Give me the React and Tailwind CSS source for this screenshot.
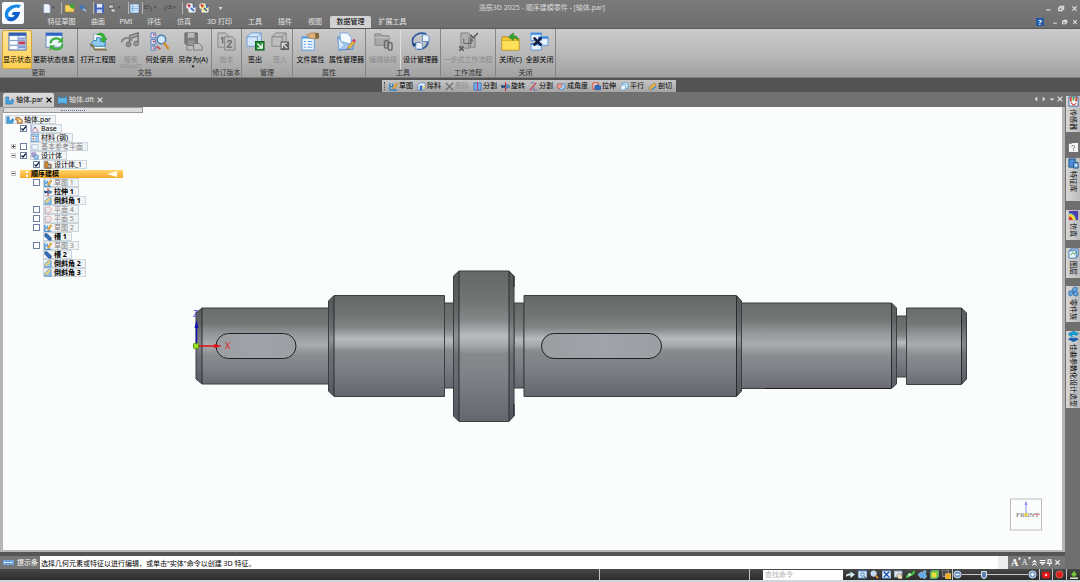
import React, { useState } from 'react';

const Svg = ({ box = 20, className = 'size-5', children }) => (
  <svg viewBox={`0 0 ${box} ${box}`} className={`shrink-0 ${className}`} fill="none" aria-hidden="true">
    {children}
  </svg>
);

// ribbon drawings, 20 x 20
const ribbonIcons = {
  status: (
    <>
      <rect x="1" y="1" width="18" height="18" fill="#dfe9f8" stroke="#4a6aa8" />
      <path d="M1 1h18v3H1z" fill="#2f5fb4" />
      <path d="M2 5h8v3H2zM2 10h8v3H2zM2 15h8v3H2z" fill="#fff" />
      <path d="M11 6h7v2h-7zM11 15h7v2h-7z" fill="#7b96cf" />
      <path d="M11 10h7v3h-7z" fill="#c43a56" />
      <path d="M2 9h16M2 14h16M10.500 4v14" stroke="#7f9ccc" />
    </>
  ),
  refresh: (
    <>
      <rect x="1" y="1" width="17" height="15" fill="#eef4fc" stroke="#5f86bd" />
      <path d="M1 1h17v3H1z" fill="#2c66c6" />
      <path d="M6 12a6 5 0 0 1 11-3" stroke="#3fae3c" strokeWidth="2.500" />
      <path d="M19 5v6h-6z" fill="#3fae3c" />
      <path d="M18 13a6 5 0 0 1-11 3" stroke="#3fae3c" strokeWidth="2.500" />
      <path d="M5 20v-6h6z" fill="#3fae3c" />
    </>
  ),
  drawing: (
    <>
      <path d="M5 2h8l4 4v12H5z" fill="#f3f7fc" stroke="#8fa7c4" />
      <path d="M2 12l3-3h3V6h4v4h5v5H2z" fill="#8ecbee" stroke="#2f7fae" />
      <path d="M1 13h3l2 6h13l-3-1H6z" fill="#b58a43" stroke="#6b5123" strokeWidth=".6" />
      <path d="M8 3c5-4 9-1 9 4h2l-4 4-3-4h2c0-3-2-4-6-4z" fill="#35b52f" stroke="#1d8420" strokeWidth=".5" />
    </>
  ),
  search3d: (
    <>
      <path d="M9 4l9-3v10M9 4v8M9 7l9-3" stroke="#707070" strokeWidth="1.500" />
      <circle cx="8" cy="13" r="2.500" fill="#8f8f8f" stroke="#6d6d6d" />
      <circle cx="16" cy="12" r="2.500" fill="#9b9b9b" stroke="#6d6d6d" />
      <path d="M0 11c3-6 7-6 12-2" stroke="#858585" strokeWidth="2" />
    </>
  ),
  where: (
    <>
      <path d="M1 1h5v5H1zM1 8h5v5H1zM1 15h5v4H1z" fill="#dfe8fa" stroke="#5478c0" />
      <path d="M3 3h2M3 10h2M3 17h2M7 15l4 3" stroke="#c43b3b" strokeWidth="1.500" />
      <circle cx="12" cy="8" r="4.500" fill="#cfe9fa" stroke="#4a7eb4" strokeWidth="1.500" />
      <path d="M15 12l4 5" stroke="#d98a2b" strokeWidth="2.500" strokeLinecap="round" />
    </>
  ),
  saveAs: (
    <>
      <path d="M1 1h13v13H3l-2-2z" fill="#7e7e7e" stroke="#626262" />
      <path d="M4 1h7v5H4z" fill="#b8b8b8" />
      <path d="M4 9h7v5H4z" fill="#969696" />
      <path d="M10 12h6l3 3v4h-9zM3 15v4h5" fill="#bdbdbd" stroke="#777" />
    </>
  ),
  revision: (
    <>
      <path d="M1 1h8l3 3v12H1z" fill="#bcbcbc" stroke="#868686" />
      <path d="M8 5h8l3 3v11H8z" fill="#b9b9b9" stroke="#868686" />
      <path d="M4 7l2-1v6M11 11c1-3 5-2 4 0l-4 5h5" stroke="#666" strokeWidth="1.300" />
    </>
  ),
  checkout: (
    <>
      <path d="M1 5l4-4h11v11l-4 3H1z" fill="#d5e6f8" stroke="#6a9bd1" />
      <path d="M1 5h11v10M12 5l4-4" stroke="#6a9bd1" />
      <rect x="10" y="10" width="9" height="9" fill="#1f8a2c" stroke="#0d5f1a" />
      <path d="M12 12l4 4M17 12v5h-5" stroke="#fff" strokeWidth="1.500" />
    </>
  ),
  checkin: (
    <>
      <path d="M1 5l4-4h11v11l-4 3H1z" fill="#bdbdbd" stroke="#858585" />
      <path d="M1 5h11v10M12 5l4-4" stroke="#858585" />
      <rect x="10" y="10" width="9" height="9" fill="#606060" />
      <path d="M17 17l-4-4M12 17v-5h5" stroke="#ddd" strokeWidth="1.500" />
    </>
  ),
  fileProps: (
    <>
      <rect x="1" y="5" width="13" height="14" fill="#f1f7fe" stroke="#5b9bdd" />
      <path d="M1 5h13v2H1z" fill="#5ea3e4" />
      <path d="M3 10h2M7 10h5M3 13h2M7 13h5M3 16h2M7 16h5" stroke="#5b9bdd" />
      <path d="M6 3l5-2h5v6h-4l-4-1z" fill="#dcb078" stroke="#8d6938" strokeWidth=".6" />
      <path d="M15 1h4v6h-4z" fill="#85683a" />
    </>
  ),
  propManager: (
    <>
      <path d="M1 5l7 3 9 2v8L2 19z" fill="#a5c8f2" stroke="#4e85cc" />
      <path d="M3 1h8l4 5v7L4 10z" fill="#f4f9ff" stroke="#76a4dd" />
      <path d="M1 6l7 8-6 5z" fill="#d9e9fb" stroke="#5b8dd1" strokeWidth=".6" />
      <path d="M11 18l1-3 5-6 2 2-5 6z" fill="#efc04b" stroke="#7b5a17" strokeWidth=".6" />
      <path d="M16 9l2-2 2 2-2 2z" fill="#d33a76" />
    </>
  ),
  links: (
    <>
      <path d="M1 2h6l2 2h7v10H1z" fill="#a8a8a8" stroke="#888" />
      <path d="M1 6h15" stroke="#c7c7c7" />
      <rect x="11" y="9" width="4" height="8" rx="2" stroke="#6b6b6b" strokeWidth="1.500" />
      <rect x="15" y="11" width="4" height="8" rx="2" stroke="#6b6b6b" strokeWidth="1.500" />
    </>
  ),
  designManager: (
    <>
      <path d="M3 14C-2 5 8-1 16 2M18 9c0 6-5 10-11 9" stroke="#2e5b9d" strokeWidth="1.800" />
      <path d="M12 3h5l2 2v5h-7zM5 11h5l2 2v5H5z" fill="#edf4ff" stroke="#5a86c7" />
      <path d="M1 12l5 0-3 4z" fill="#173d7c" />
    </>
  ),
  workflow: (
    <>
      <path d="M2 1h8l2 3v13H2zM10 6h7v10h-7z" fill="#b0b0b0" stroke="#858585" />
      <path d="M0 15l5 5M5 15l-5 5M12 3l3 3 5-5" stroke="#555" strokeWidth="1.500" />
      <path d="M5 7v5h8V8M11 10l2-3 2 3" stroke="#5f5f5f" />
    </>
  ),
  closeFile: (
    <>
      <path d="M1 5h6l2 2h10v12H1z" fill="#f5c733" stroke="#b88d19" />
      <path d="M1 9h18v10H1z" fill="#ffe05a" stroke="#c29a25" strokeWidth=".6" />
      <path d="M18 9c0-4-2-5-5-5V1L8 5l5 4V6c2 0 4 1 5 3z" fill="#34a52d" stroke="#18761b" strokeWidth=".5" />
    </>
  ),
  closeAll: (
    <>
      <path d="M1 1h11v8H1zM9 5h10v9H9zM1 12h11v7H1z" fill="#e7f1fd" stroke="#5b97dc" />
      <path d="M1 1h11v2H1zM9 5h10v2H9zM1 12h11v2H1z" fill="#3f87dd" />
      <path d="M4 6l8 8M12 6l-8 8" stroke="#101a3d" strokeWidth="2.500" />
    </>
  ),
};

const ribbonGroups = [
  { name: '更新', width: 'w-[78px]', pad: 'pl-[2px]', items: [
    { icon: 'status', label: '显示状态', width: 'w-[30px]', active: true },
    { icon: 'refresh', label: '更新状态信息', width: 'w-[44px]' },
  ] },
  { name: '文档', width: 'w-[134px]', items: [
    { icon: 'drawing', label: '打开工程图', width: 'w-[40px]' },
    { icon: 'search3d', label: '搜索', sub: '3DfindIT', width: 'w-[25px]', disabled: true },
    { icon: 'where', label: '何处使用', width: 'w-[33px]' },
    { icon: 'saveAs', label: '另存为(A)', width: 'w-[34px]', menu: true },
  ] },
  { name: '修订版本', width: 'w-[30px]', items: [
    { icon: 'revision', label: '版本', width: 'w-[29px]', disabled: true },
  ] },
  { name: '管理', width: 'w-[51px]', items: [
    { icon: 'checkout', label: '签出', width: 'w-[26px]' },
    { icon: 'checkin', label: '签入', width: 'w-[24px]', disabled: true },
  ] },
  { name: '属性', width: 'w-[73px]', items: [
    { icon: 'fileProps', label: '文件属性', width: 'w-[35px]' },
    { icon: 'propManager', label: '属性管理器', width: 'w-[37px]' },
  ] },
  { name: '工具', width: 'w-[75px]', items: [
    { icon: 'links', label: '编辑链接', width: 'w-[34px]', disabled: true },
    { icon: 'designManager', label: '设计管理器', width: 'w-[40px]', divider: true },
  ] },
  { name: '工作流程', width: 'w-[55px]', items: [
    { icon: 'workflow', label: '一步式工作流程', width: 'w-[54px]', disabled: true },
  ] },
  { name: '关闭', width: 'w-[60px]', items: [
    { icon: 'closeFile', label: '关闭(C)', width: 'w-[29px]' },
    { icon: 'closeAll', label: '全部关闭', width: 'w-[29px]' },
  ] },
];

const menuTabs = [
  ['特征草图', 'w-[43px]'],
  ['曲面', 'w-[30px]'],
  ['PMI', 'w-[26px]'],
  ['评估', 'w-[30px]'],
  ['仿真', 'w-[30px]'],
  ['3D 打印', 'w-[41px]'],
  ['工具', 'w-[30px]'],
  ['插件', 'w-[30px]'],
  ['视图', 'w-[30px]'],
  ['数据管理', 'w-[41px]'],
  ['扩展工具', 'w-[43px]'],
];

// small drawings, 10 x 10
const smallIcons = {
  sketch: (
    <>
      <path d="M1 1v8h8M1 5h3V2M6 9V6" stroke="#2b7fc9" strokeWidth="1.300" />
      <path d="M4 7l4-6 2 1-4 6z" fill="#f0b13b" stroke="#8c6317" strokeWidth=".4" />
    </>
  ),
  cut: (
    <>
      <path d="M1 3l2-2h6v6L7 9H1z" fill="#e4f0fb" stroke="#3b78bd" strokeWidth=".7" />
      <path d="M3 4h3v5H3z" fill="#2c73c9" />
      <path d="M6 6l3-3v3L7 8z" fill="#eccb6a" />
    </>
  ),
  remove: <path d="M1 1l8 8M9 1L1 9" stroke="#666" strokeWidth="1.400" />,
  split: (
    <>
      <path d="M1 1h8v8H1z" fill="#74aeea" stroke="#2a6ab5" strokeWidth=".8" />
      <path d="M5 0v10" stroke="#c42c60" />
    </>
  ),
  rotate: (
    <>
      <path d="M3 4l4-1 3 2-3 2-4-1z" fill="#5c9bd4" stroke="#215b98" strokeWidth=".8" />
      <path d="M5 0v10" stroke="#c43b2f" strokeWidth="1.200" />
      <path d="M0 3l5 2-4 2z" fill="#123c78" />
    </>
  ),
  slash: (
    <>
      <path d="M1 9l7-8" stroke="#c83246" strokeWidth="1.200" />
      <path d="M2 1h4M6 6l-1 3h4" stroke="#815ebb" />
    </>
  ),
  angle: (
    <>
      <path d="M1 2h8v5L5 9 1 7z" fill="#a5caef" stroke="#417cbb" strokeWidth=".7" />
      <path d="M0 3l5-1v3L2 8z" fill="#f5a68e" stroke="#cf4131" strokeWidth=".6" />
    </>
  ),
  extrude: (
    <>
      <path d="M1 1h6v7H1z" fill="#f6d8d4" stroke="#cf4131" />
      <path d="M3 4l3-1 4 2v3L7 9 3 8z" fill="#2c6dbd" stroke="#153f78" strokeWidth=".4" />
    </>
  ),
  parallel: (
    <>
      <path d="M3 1h6v6H3z" fill="#cfe6f7" stroke="#529bcc" strokeWidth=".8" />
      <path d="M1 4l5-1v5l-5 1z" fill="#f0f9ff" stroke="#529bcc" strokeWidth=".6" />
    </>
  ),
  section: (
    <>
      <path d="M1 7l6-6 2 2-6 6z" fill="#eeb541" stroke="#92671a" strokeWidth=".6" />
      <path d="M3 9l6-5v2L5 9z" fill="#4f91d6" />
    </>
  ),
  part: <path d="M1 1h3v4l2 1 2-3 2 2-2 4H1z" fill="#47a3df" stroke="#1d6ca9" strokeWidth=".6" />,
  lock: (
    <>
      <path d="M1 2h4l4 3v4H3V5H1z" fill="#f3b762" stroke="#79461c" strokeWidth=".8" />
      <path d="M5 5h2v2H5z" fill="#fff" />
    </>
  ),
  base: (
    <>
      <path d="M1 0v9h9" stroke="#8d85cb" />
      <path d="M2 7l3-4 2 2 2 3" stroke="#b64f77" />
      <circle cx="5" cy="3" r="1" fill="#2d65b4" />
    </>
  ),
  material: (
    <>
      <path d="M0 1h10v8H0z" fill="#e2f1fd" stroke="#3285ca" />
      <path d="M2 3h2M2 6h2" stroke="#bd5134" strokeWidth="1.500" />
      <path d="M5 3h4M5 6h4" stroke="#3285ca" />
    </>
  ),
  planes: <path d="M1 2h8v6H1zM1 8V4" fill="#eef4fb" stroke="#a2bcda" strokeWidth=".8" />,
  bodies: (
    <>
      <path d="M1 1h5v5H1z" fill="#b3a6d6" stroke="#6757a0" strokeWidth=".6" />
      <path d="M4 4h5v5H4z" fill="#9ecbf0" stroke="#377bb5" strokeWidth=".7" />
    </>
  ),
  body: (
    <>
      <path d="M1 1h4v3h4v5H1z" fill="#d98f33" stroke="#62371b" strokeWidth=".8" />
      <path d="M5 5h3v3H5z" fill="#c0daf3" stroke="#345" strokeWidth=".5" />
    </>
  ),
  plane: (
    <>
      <path d="M1 3l4-2 4 2v4L5 9 1 8z" fill="#fbeeee" stroke="#d88888" strokeWidth=".8" />
      <path d="M2 1v8M5 4v3" stroke="#8fb4e0" strokeWidth=".8" />
    </>
  ),
  chamfer: (
    <>
      <path d="M1 5l4-4h4v8H1z" fill="#8fc2ec" stroke="#2f74b0" strokeWidth=".7" />
      <path d="M1 6l5-5h2v2L3 8z" fill="#ebd07c" />
    </>
  ),
  slot: <path d="M1 1h3l5 5v3H6L1 4z" fill="#346dbb" stroke="#173a70" strokeWidth=".7" />,
};

const SmallIcon = ({ name, className = 'size-[9px]' }) => (
  <Svg box={10} className={className}>{smallIcons[name]}</Svg>
);

const floatTools = [
  ['sketch', '草图'],
  ['cut', '除料'],
  ['remove', '删除', true],
  ['split', '分割'],
  ['rotate', '旋转'],
  ['slash', '分割'],
  ['angle', '成角度'],
  ['extrude', '拉伸'],
  ['parallel', '平行'],
  ['section', '剖切'],
];

const treeRows = [
  { id: 'base', level: 1, check: true, icon: 'base', label: 'Base' },
  { id: 'material', level: 1, icon: 'material', label: '材料 (钢)' },
  { id: 'refs', level: 1, expander: '+', check: false, icon: 'planes', label: '基本参考平面', muted: true },
  { id: 'bodies', level: 1, expander: '−', check: true, icon: 'bodies', label: '设计体' },
  { id: 'body1', level: 2, check: true, icon: 'body', label: '设计体_1' },
  { id: 'ordered', section: true, expander: '−', label: '顺序建模' },
  { id: 'sk1', level: 2, check: false, icon: 'sketch', label: '草图 1', muted: true },
  { id: 'ex1', level: 2, icon: 'rotate', label: '拉伸 1', bold: true },
  { id: 'ch1', level: 2, icon: 'chamfer', label: '倒斜角 1', bold: true },
  { id: 'pl4', level: 2, check: false, icon: 'plane', label: '平面 4', muted: true },
  { id: 'pl5', level: 2, check: false, icon: 'plane', label: '平面 5', muted: true },
  { id: 'sk2', level: 2, check: false, icon: 'sketch', label: '草图 2', muted: true },
  { id: 'sl1', level: 2, icon: 'slot', label: '槽 1', bold: true },
  { id: 'sk3', level: 2, check: false, icon: 'sketch', label: '草图 3', muted: true },
  { id: 'sl2', level: 2, icon: 'slot', label: '槽 2', bold: true },
  { id: 'ch2', level: 2, icon: 'chamfer', label: '倒斜角 2', bold: true },
  { id: 'ch3', level: 2, icon: 'chamfer', label: '倒斜角 3', bold: true },
];

const sideTabs = [
  { label: '传感器', height: 'h-9', gap: 'mb-[10px]', art: (
    <>
      <path d="M1 1h10v10H1z" fill="#fff" stroke="#3762a0" />
      <path d="M2 1h2v5H2z" fill="#d03b32" /><path d="M5 1h2v4H5z" fill="#2fa44b" /><path d="M8 1h2v5H8z" fill="#d03b32" />
      <path d="M3 7l3 3 3-2" stroke="#d65043" strokeWidth="1.300" />
    </>
  ) },
  { label: '', title: '帮助', height: 'h-[10px]', gap: 'mb-[6px]', art: (
    <>
      <path d="M1 2h3l1-1h6v10H1z" fill="#f4f4f4" />
      <path d="M4 5c1-2 4-1 3 1L6 7v1M6 9v1" stroke="#666" />
    </>
  ) },
  { label: '特征库', height: 'h-[43px]', gap: 'mb-[9px]', art: (
    <>
      <path d="M1 1h7v9H1z" fill="#4d8cd6" stroke="#23568f" />
      <path d="M6 5h5v6H6z" fill="#79aee6" stroke="#23568f" />
      <path d="M8 7h2v2H8z" fill="#fff" />
    </>
  ) },
  { label: '仿真', height: 'h-[30px]', gap: 'mb-[8px]', art: (
    <>
      <path d="M1 1h10v10H1z" fill="#4b3fae" />
      <path d="M1 3a8 8 0 0 1 8 8H1z" fill="#4fa6c4" />
      <path d="M1 4a7 7 0 0 1 7 7H1z" fill="#f1dc3a" />
      <path d="M1 7a4 4 0 0 1 4 4H1z" fill="#dd3526" />
    </>
  ) },
  { label: '图层', height: 'h-[30px]', gap: 'mb-[8px]', art: (
    <>
      <path d="M3 1h8v8H3z" fill="#d1e5f9" stroke="#3b73b4" />
      <path d="M1 3h8v8H1z" fill="#f0f7fd" stroke="#3b73b4" />
      <path d="M3 8l2-3 2 2 2-3" stroke="#34a357" />
    </>
  ) },
  { label: '零件族', height: 'h-9', gap: 'mb-[9px]', art: (
    <path d="M1 6l2-1 2 1v3l-2 2-2-1zM5 3l2-2 3 1v3L7 7 5 6zM6 7l3-1 2 1v3l-2 1-3-1z" fill="#62a6e1" stroke="#235d9b" strokeWidth=".7" />
  ) },
  { label: '佳曲参数化设计选型', height: 'h-[77px]', gap: '', art: (
    <>
      <path d="M6 0l6 3-3 2-3-1-2 1 8 4-6 3-6-3 3-2 3 1 2-1-8-4z" fill="#155fae" />
      <path d="M6 0l6 3-3 2-3-1-2 1 2 1-1 1-5-3z" fill="#119fd1" />
    </>
  ) },
];

const QuickBar = () => {
  const sep = <span className="h-3 w-px bg-[#b5b5b5]" />;
  const btn = 'grid h-3 w-[11px] place-items-center';
  return (
    <div className="flex items-center pl-[17px]">
      <button className={btn} aria-label="新建">
        <Svg box={10} className="size-[9px]"><path d="M2 0h5l2 2v8H2z" fill="#eef5fd" stroke="#8eabd0" strokeWidth=".7" /></Svg>
      </button>
      <span className="mr-[5px] w-1 text-[5px] text-[#4d4d4d]">▾</span>
      {sep}
      <button className={`${btn} ml-[2px]`} aria-label="打开">
        <Svg box={10} className="size-[10px]">
          <path d="M0 2h4l1 1h4v6H0z" fill="#f6d25e" stroke="#a9821f" strokeWidth=".6" />
          <path d="M5 3c0-3 4-3 4 0l1-1-2 4-3-2z" fill="#38a737" />
        </Svg>
      </button>
      <button className={`${btn} ml-[2px]`} aria-label="云">
        <Svg box={10} className="size-[8px]"><circle cx="4" cy="4" r="3" fill="#4077b7" /><path d="M5 6l4 3" stroke="#9cbee4" strokeWidth="2" /></Svg>
      </button>
      <span className="w-[5px]" />
      {sep}
      <button className={btn} aria-label="保存">
        <Svg box={10} className="size-[9px]">
          <path d="M0 0h10v10H0z" fill="#3d5fc0" /><path d="M2 0h6v4H2z" fill="#e3ebfb" /><path d="M2 6h6v4H2z" fill="#c6d3ee" />
        </Svg>
      </button>
      <button className={`${btn} ml-[2px]`} aria-label="打印">
        <Svg box={10} className="size-[9px]"><path d="M1 1h5v4H1zM4 4l5 3-3 3-3-3z" fill="#c9c9c9" stroke="#4d4d4d" strokeWidth=".7" /></Svg>
      </button>
      <span className="mr-[6px] w-1 text-[5px] text-[#4d4d4d]">▾</span>
      {sep}
      <button className={btn} aria-label="表">
        <Svg box={10} className="size-[9px]"><path d="M0 0h10v10H0z" fill="#e9f4ff" stroke="#3d7fc2" /><path d="M1 3h8M1 5h8M1 7h8M3 1v8" stroke="#5997d5" strokeWidth=".7" /></Svg>
      </button>
      <span className="w-[2px]" />
      {sep}
      <button className={btn} aria-label="撤销">
        <Svg box={10} className="size-[9px]"><path d="M1 1v4h4M1 4c3-4 9-1 6 4" stroke="#555" strokeWidth="1.200" /></Svg>
      </button>
      <span className="w-[8px] text-[5px] text-[#4d4d4d]">▾</span>
      <button className={btn} aria-label="重做">
        <Svg box={10} className="size-[9px]"><path d="M9 1v4H5M9 4C6 0 0 3 3 8" stroke="#555" strokeWidth="1.200" /></Svg>
      </button>
      <span className="w-[9px] text-[5px] text-[#4d4d4d]">▾</span>
      {sep}
      {['选择', '过滤'].map((t, i) => (
        <button key={t} className={`${btn} ml-[2px]`} aria-label={t}>
          <Svg box={10} className="size-[10px]">
            <path d="M1 1h5v3h3v5H3V5H1z" fill={i ? '#f3dd68' : '#cfe2f8'} stroke="#fff" />
            <path d="M1 1l4 1-2 3z" fill="#cf2f36" />
            <path d="M5 5l3 3M8 2v3" stroke="#3065b5" strokeWidth="1.500" />
          </Svg>
        </button>
      ))}
      <button className={`${btn} ml-[6px] text-[6px] text-[#eee]`} aria-label="自定义">▾</button>
    </div>
  );
};

const WindowButtons = ({ help }) => (
  <div className="flex items-center gap-1 pr-[2px] text-[#dedede]">
    {help && (
      <button className="mr-1 grid size-[8px] place-items-center bg-[#235ba8] text-[7px] leading-none font-bold text-white" aria-label="帮助">?</button>
    )}
    {[
      ['最小化', 'M2 7h6'],
      ['还原', 'M1 4h5v4H1zM3 4V2h5v4H6'],
      ['关闭', 'M2 2l6 6M8 2L2 8'],
    ].map(([label, d]) => (
      <button key={label} className={help ? '' : 'ml-[2px]'} aria-label={label}>
        <Svg box={10} className={help ? 'size-[6px]' : 'size-[7px]'}><path d={d} stroke="currentColor" strokeWidth="1.800" /></Svg>
      </button>
    ))}
  </div>
);

const Header = ({ tab, onTab }) => (
  <header className="flex h-7 shrink-0 bg-linear-to-b from-[#7b7b7b] to-[#6e6e6e]">
    <div className="w-6 shrink-0 pt-[2px] pl-[2px]">
      <svg viewBox="0 0 22 22" className="size-[22px]" aria-label="浩辰3D">
        <rect width="22" height="22" rx="2" fill="#f6faff" />
        <path d="M19 3C11 1 4 5 3 11c-1 6 3 9 8 7 4-1 6-4 7-8h-7l-1 3h3c-1 2-3 3-5 2-3-1-2-5 1-7 3-3 6-3 8-2z" fill="#1687e8" />
        <path d="M18 10h-7l-1 3h3c-1 2-3 3-5 2l-3 3c4 3 11 1 13-8z" fill="#0d5ecb" />
      </svg>
    </div>
    <div className="flex min-w-0 flex-1 flex-col">
      <div className="grid h-4 grid-cols-[1fr_auto_1fr] items-center">
        <QuickBar />
        <h1 className="pr-5 leading-[10px] text-[#dadada]">浩辰3D 2025 - 顺序建模零件 - [轴体.par]</h1>
        <div className="flex justify-end"><WindowButtons /></div>
      </div>
      <div className="flex h-3 items-stretch justify-between">
        <nav className="flex pl-4">
          {menuTabs.map(([name, width]) => (
            <button
              key={name}
              onClick={() => onTab(name)}
              className={`${width} rounded-t-xs text-center leading-3 whitespace-nowrap ${
                tab === name ? 'bg-[#d2d2d2] text-black' : 'text-[#e4e4e4]'
              }`}
            >
              {name}
            </button>
          ))}
        </nav>
        <WindowButtons help />
      </div>
    </div>
  </header>
);

const Ribbon = () => (
  <section className="flex h-[50px] shrink-0 border-y border-t-[#595959] border-b-[#7d7d7d] bg-linear-to-b from-[#cbcbcb] via-[#b9b9b9] to-[#a1a1a1]">
    {ribbonGroups.map((group) => (
      <div key={group.name} className={`${group.width} flex shrink-0 flex-col border-r border-[#858585]`}>
        <div className={`flex flex-1 pt-px ${group.pad || ''}`}>
          {group.items.map((item) => (
            <button
              key={item.label}
              disabled={item.disabled}
              className={`${item.width} flex h-[39px] shrink-0 flex-col items-center pt-[2px] whitespace-nowrap ${
                item.active ? 'rounded-xs border border-[#d0a33c] bg-linear-to-b from-[#ffe49a] to-[#ffd04d] pt-px' : ''
              } ${item.divider ? 'border-l border-[#dedede]' : ''} ${item.disabled ? 'text-[#8b8b8b]' : 'text-black'}`}
            >
              <Svg className="size-[19px]">{ribbonIcons[item.icon]}</Svg>
              <span className="mt-[5px] leading-2">{item.label}</span>
              {item.sub && <span className="font-['Liberation_Serif',serif] text-[6px] leading-1">{item.sub}</span>}
              {item.menu && <span className="pt-px text-[3px] leading-1">▼</span>}
            </button>
          ))}
        </div>
        <div className="text-center leading-2 whitespace-nowrap text-[#303030]">{group.name}</div>
      </div>
    ))}
  </section>
);

const FloatBar = () => (
  <div className="flex h-[14px] shrink-0 items-end justify-center bg-[#535353] pr-[22px]">
    <div className="flex h-3 items-center gap-1 bg-linear-to-b from-[#c6c6c6] to-[#a5a5a5] pr-1 pl-[2px]">
      <span className="h-2 border-l border-dotted border-[#444]" />
      {floatTools.map(([icon, label, disabled], i) => (
        <button key={i} disabled={disabled} className={`flex items-center gap-px leading-3 whitespace-nowrap ${disabled ? 'text-[#8e8e8e]' : 'text-black'}`}>
          <SmallIcon name={icon} />
          {label}
        </button>
      ))}
    </div>
  </div>
);

const CloseMark = () => (
  <Svg box={10} className="size-[6px]"><path d="M1 1l8 8M9 1L1 9" stroke="currentColor" strokeWidth="2" /></Svg>
);

const DocTabs = () => (
  <div className="flex h-[15px] shrink-0 items-end pl-[3px]">
    <div className="flex h-[14px] w-[51px] items-center justify-between rounded-t-xs bg-linear-to-b from-[#dedede] to-[#c4c4c4] px-[2px] text-black">
      <button className="flex items-center gap-[2px] leading-3"><SmallIcon name="part" className="size-[9px]" />轴体.par</button>
      <button aria-label="关闭 轴体.par"><CloseMark /></button>
    </div>
    <div className="flex h-[14px] w-[51px] items-center justify-between pr-[2px] pl-1 text-[#e2e2e2]">
      <button className="flex items-center gap-[2px] leading-3">
        <Svg box={10} className="size-[9px]"><path d="M0 1h2v1h6V1h2v8H8V8H2v1H0z" fill="#5fb5ea" stroke="#2a77ac" strokeWidth=".6" /></Svg>
        轴体.dft
      </button>
      <button aria-label="关闭 轴体.dft"><CloseMark /></button>
    </div>
    <div className="ml-auto flex h-[15px] items-center gap-[2px] pr-[2px] pb-[2px] text-[#e2e2e2]">
      {[['上一个', 'M7 1v8L3 5z'], ['下一个', 'M3 1v8l4-4z'], ['列表', 'M1 4h8L5 8z']].map(([label, d]) => (
        <button key={label} aria-label={label}><Svg box={10} className="size-[6px]"><path d={d} fill="currentColor" /></Svg></button>
      ))}
      <button aria-label="关闭"><CloseMark /></button>
    </div>
  </div>
);

const TreeCheck = ({ label, initial }) => {
  const [on, setOn] = useState(initial);
  return (
    <span className="grid size-[7px] shrink-0">
      <input
        type="checkbox"
        aria-label={label}
        checked={on}
        onChange={() => setOn(!on)}
        className="col-start-1 row-start-1 size-[7px] appearance-none border border-[#6d80a0] bg-white"
      />
      {on && (
        <svg viewBox="0 0 7 7" className="pointer-events-none col-start-1 row-start-1 size-[7px]" fill="none">
          <path d="M1.500 3.500l1.500 1.500 3-3.500" stroke="#101c3a" strokeWidth="1.200" />
        </svg>
      )}
    </span>
  );
};

const Expander = ({ sign, label }) => (
  <button aria-label={`展开 ${label}`} className="block size-[5px]">
    <svg viewBox="0 0 10 10" className="size-[5px]" fill="none">
      <path d="M1 1h8v8H1z" fill="#fff" stroke="#8a8a8a" />
      <path d={sign === '+' ? 'M2 5h6M5 2v6' : 'M2 5h6'} stroke="#222" strokeWidth="1.500" />
    </svg>
  </button>
);

const TreeRow = ({ row }) => {
  if (row.section) {
    return (
      <li className="flex h-[9px] items-center gap-1">
        <Expander sign={row.expander} label={row.label} />
        <div className="flex h-2 w-[103px] items-center justify-between bg-linear-to-b from-[#ffd568] to-[#f5aa26] pr-[6px] pl-[6px] font-bold leading-2 text-black">
          <span className="flex items-center gap-[3px]">
            <span className="h-[6px] border-l-2 border-dotted border-white" />
            {row.label}
          </span>
          <svg viewBox="0 0 10 6" className="h-[6px] w-[10px]"><path d="M0 3l10-3v6z" fill="#fffbe8" /></svg>
        </div>
      </li>
    );
  }
  const tone = row.muted ? 'text-[#7e7e7e]' : 'text-black';
  return (
    <li className={`flex h-[9px] items-center ${row.level === 2 ? 'pl-[13px]' : ''}`}>
      <span className="w-[9px]">{row.expander && <Expander sign={row.expander} label={row.label} />}</span>
      <span className="w-[10px]">{row.check !== undefined && <TreeCheck label={row.label} initial={row.check} />}</span>
      <span className={`flex h-[9px] items-center gap-[2px] border border-[#ccd5dc] bg-[#f1f4f5] pr-1 leading-2 whitespace-nowrap ${tone} ${row.bold ? 'font-bold' : ''}`}>
        <SmallIcon name={row.icon} className="size-2" />
        {row.label}
      </span>
    </li>
  );
};

const FeatureTree = () => (
  <aside className="relative w-[140px]">
    <div className="flex h-[6px] items-center justify-center border border-[#9a9a9a] bg-[#dcdcdc]">
      <span className="w-6 border-t border-dotted border-[#5a7396]" />
    </div>
    <ul className="pt-[2px] pl-2">
      <li className="-ml-[6px] flex h-[9px] items-center">
        <span className="flex h-[9px] items-center gap-px border border-[#ccd5dc] bg-[#f1f4f5] pr-1 leading-2 text-black">
          <SmallIcon name="part" className="size-2" />
          <SmallIcon name="lock" className="size-2" />
          轴体.par
        </span>
      </li>
      {treeRows.map((row) => <TreeRow key={row.id} row={row} />)}
    </ul>
  </aside>
);

// outline, chamfer faces and the x of every inner edge
const shaftParts = [
  { d: 'M444 303h10v85h-10z' },
  { d: 'M514 303h10v85h-10z' },
  { d: 'M896 316h11v61h-11z' },
  { d: 'M202 308H329V384H202L196 379V313z', edges: [[202, 308, 384]], faces: 'M202 308V384L196 379V313z', soft: true },
  { d: 'M334 295.500H444.500V396.500H334L328.500 391V301z', edges: [[334, 296, 396]], faces: 'M334 296V396L328.500 391V301z' },
  { d: 'M459 271H509L514 276V416L509 421.500H459L453.500 416V276z', edges: [[459, 271, 421], [509, 271, 421]], faces: 'M459 271V421L453.500 416V276zM509 271V421L514 416V276z' },
  { d: 'M524 295.500H736.500L741.500 301V391L736.500 396.500H524z', edges: [[736.5, 296, 396]], faces: 'M736.500 296V396L741.500 391V301z' },
  { d: 'M741.500 303H891.500L896.500 308V384L891.500 388.500H741.500z', edges: [[891.5, 303, 388]], faces: 'M891.500 303V388L896.500 384V308z', soft: true },
  { d: 'M906.500 308H961.500L966.500 313V379L961.500 384.500H906.500z', edges: [[961.5, 308, 384]], faces: 'M961.500 308V384L966.500 379V313z', soft: true },
];

const ShaftView = () => (
  <svg viewBox="3 107 1059 443" className="absolute inset-0 size-full" role="img" aria-label="轴体">
    <defs>
      <linearGradient id="steel" x1="0" y1="0" x2="0" y2="1">
        <stop offset="0" stopColor="#666767" />
        <stop offset=".2" stopColor="#727373" />
        <stop offset=".32" stopColor="#858687" />
        <stop offset=".38" stopColor="#a0a2a5" />
        <stop offset=".43" stopColor="#b9bbc0" />
        <stop offset=".5" stopColor="#a3a6a9" />
        <stop offset=".55" stopColor="#88898c" />
        <stop offset=".7" stopColor="#7f8189" />
        <stop offset=".88" stopColor="#707178" />
        <stop offset="1" stopColor="#66666e" />
      </linearGradient>
      <linearGradient id="steelSoft" x1="0" y1="0" x2="0" y2="1">
        <stop offset="0" stopColor="#6c6e6d" />
        <stop offset=".2" stopColor="#747676" />
        <stop offset=".34" stopColor="#939597" />
        <stop offset=".48" stopColor="#aaacb0" />
        <stop offset=".62" stopColor="#8b8c8f" />
        <stop offset=".8" stopColor="#7e8089" />
        <stop offset="1" stopColor="#696971" />
      </linearGradient>
      <linearGradient id="pocket" x1="0" y1="0" x2="1" y2="0">
        <stop offset="0" stopColor="#9b9da1" />
        <stop offset=".5" stopColor="#a1a3ab" />
        <stop offset="1" stopColor="#9c9ea3" />
      </linearGradient>
    </defs>
    {shaftParts.map((part) => (
      <g key={part.d}>
        <path d={part.d} fill={part.soft ? 'url(#steelSoft)' : 'url(#steel)'} stroke="#3c3e41" />
        {part.faces && <path d={part.faces} fill="#33353a" fillOpacity=".3" />}
        {part.edges && part.edges.map(([x, y1, y2]) => <path key={x} d={`M${x} ${y1}V${y2}`} stroke="#2b2c2f" />)}
      </g>
    ))}
    <path d="M514 276v11M514 404v12M765 388.500h126" stroke="#1d1d20" />
    <rect x="216" y="333.500" width="80" height="25" rx="12.500" fill="url(#pocket)" stroke="#202124" />
    <rect x="541.500" y="333.500" width="120" height="25" rx="12.500" fill="url(#pocket)" stroke="#202124" />

    {/* origin triad */}
    <path d="M196.500 346v-22" stroke="#1414a8" strokeWidth="1.500" />
    <path d="M194.500 328l2-8 2 8z" fill="#1414a8" />
    <path d="M197 346h18" stroke="#e01010" strokeWidth="1.500" />
    <path d="M214 344l8 2-8 2z" fill="#e01010" />
    <rect x="193.500" y="343.500" width="5" height="5" rx="1" fill="#9be01c" stroke="#4f9a12" />
    <text x="193" y="317" fontSize="8" fill="#4a4ae8">Z</text>
    <text x="225" y="349" fontSize="9" fill="#e01c1c">X</text>

    {/* view cube */}
    <rect x="1010.500" y="499" width="31" height="31" fill="#fbfdfc" stroke="#bcbcbc" />
    <path d="M1026 514v-12" stroke="#8a8af0" />
    <path d="M1024.500 505l1.500-4 1.500 4z" fill="#8a8af0" />
    <text x="1016" y="517" fontSize="7" fill="#6e6e6e" className="font-['Liberation_Serif',serif]">FRONT</text>
    <path d="M1034 514.500h6" stroke="#f08a8a" />
    <circle cx="1026" cy="514.500" r="1.500" fill="#e3d21c" />
  </svg>
);

const SideTabs = () => (
  <aside className="flex w-[15px] shrink-0 flex-col bg-[#6f6f6f] pt-1 pl-px">
    {sideTabs.map((tab) => (
      <button
        key={tab.label || tab.title}
        aria-label={tab.label || tab.title}
        className={`${tab.height} ${tab.gap} flex shrink-0 flex-col items-center gap-[2px] text-black ${tab.label ? 'bg-linear-to-r from-[#d6d6d6] to-[#bdbdbd]' : ''}`}
      >
        <Svg box={12} className="size-[11px]">{tab.art}</Svg>
        <span className="leading-[10px] whitespace-nowrap [text-orientation:sideways] [writing-mode:vertical-rl]">{tab.label}</span>
      </button>
    ))}
  </aside>
);

const PromptBar = () => (
  <div className="flex h-[13px] shrink-0 bg-[#767676] text-white">
    <div className="flex w-10 shrink-0 items-center gap-[3px] pl-[3px] leading-3">
      <svg viewBox="0 0 11 5" className="h-[5px] w-[11px]">
        <rect width="11" height="5" fill="#6ea3df" />
        <path d="M1 2.500h9" stroke="#fff" strokeDasharray="2 1" />
      </svg>
      提示条
    </div>
    <p className="flex-1 bg-white pl-px leading-[15px] text-black">选择几何元素或特征以进行编辑，或单击"实体"命令以创建 3D 特征。</p>
    <div className="w-[10px] bg-[#ededed]" />
    <div className="flex w-[57px] items-center justify-between pr-1 pl-[3px] font-['Liberation_Serif',serif]">
      <button className="flex text-[10px] leading-3 font-bold" aria-label="放大字体">
        A<Svg box={10} className="size-[3px]"><path d="M0 8l5-8 5 8z" fill="currentColor" /></Svg>
      </button>
      <button className="flex text-[8px] leading-3" aria-label="缩小字体">
        A<Svg box={10} className="size-[3px]"><path d="M0 1l5 8 5-8z" fill="currentColor" /></Svg>
      </button>
      {[
        ['收起', 'M2 5l3-3 3 3M2 9l3-3 3 3'],
        ['选项', 'M1 2h8M2 5h6L5 8z'],
        ['固定', 'M3 1h4v5H3zM1 6h8M5 6v4'],
        ['关闭', 'M2 2l6 6M8 2L2 8'],
      ].map(([label, d]) => (
        <button key={label} aria-label={label}><Svg box={10} className="size-[7px]"><path d={d} stroke="currentColor" strokeWidth="1.500" /></Svg></button>
      ))}
    </div>
  </div>
);

const statusIcons = [
  ['下一步', <path d="M0 8V6c1-2 3-2 5-2V2l5 3-5 4V6C3 6 1 6 0 8z" fill="#d6effb" />],
  ['窗口缩放', <><path d="M0 1h10v8H0z" fill="#dbeaf9" stroke="#3d7cc2" /><circle cx="5" cy="5" r="2" stroke="#3d6fae" /><path d="M7 7l2 2" stroke="#222" /></>],
  ['缩放', <><circle cx="4" cy="4" r="3" fill="#b7dcf8" stroke="#d2e4f5" /><path d="M6 6l3 3" stroke="#d98a35" strokeWidth="2" /></>],
  ['适合', <><path d="M0 1h10v8H0z" fill="#e5effa" stroke="#5d8cd0" /><path d="M2 2l6 6M8 2L2 8" stroke="#1c50af" strokeWidth="1.500" /></>],
  ['平移', <><path d="M0 1h9v7H0z" fill="#d8e4f2" stroke="#789" /><path d="M3 6l2-2 4 2v4H5z" fill="#f1dfc4" stroke="#6c5b46" strokeWidth=".6" /></>],
  ['旋转', <><path d="M1 9c0-4 3-3 4-5M9 1c0 4-3 3-4 5" stroke="#42c340" strokeWidth="2.500" /><path d="M3 3l3 2-3 3z" fill="#e6ffe6" /></>],
  ['常规视图', <path d="M0 5l4-3 1 2 2-4 2 2-1 3 2 2-3 3-2-2-2 1z" fill="#61aaea" stroke="#bfe0f8" strokeWidth=".6" />],
  ['视图样式', <><path d="M0 2l3-2h7v7l-3 3H0z" fill="#78c63a" stroke="#4a87c5" /><path d="M2 3h5v5H2z" fill="#f2dc45" /></>],
  ['颜色', <><path d="M0 0h7v7H0z" fill="#4a4a4a" stroke="#a9a9a9" /><path d="M4 4h6v6H4z" fill="#efac22" stroke="#fad680" strokeWidth=".6" /></>],
];

const StatusBar = () => {
  const [zoom, setZoom] = useState(31);
  const sep = <span className="h-3 w-px bg-[#c5c5c5]" />;
  return (
    <footer className="flex h-[13px] shrink-0 items-center border-b-2 border-[#cfd8dd] bg-linear-to-b from-[#484848] to-[#2c2c2c]">
      <div className="flex flex-1 justify-end pr-[149px]">{sep}</div>
      {sep}
      <input
        aria-label="查找命令"
        placeholder="查找命令"
        className="ml-[13px] h-[10px] w-20 bg-white px-[2px] text-[7px] leading-[10px] placeholder:text-[#b3b3b3]"
      />
      <div className="mr-px ml-[3px] flex items-center gap-[3px]">
        {statusIcons.map(([label, art]) => (
          <button key={label} aria-label={label}><Svg box={10} className="size-[9px]">{art}</Svg></button>
        ))}
      </div>
      {sep}
      <button aria-label="缩小"><Svg box={10} className="size-[9px]"><circle cx="5" cy="5" r="4" fill="#6d94c4" stroke="#dde8f5" /><path d="M3 5h4" stroke="#fff" strokeWidth="1.500" /></Svg></button>
      <input
        type="range"
        aria-label="缩放比例"
        value={zoom}
        onChange={(e) => setZoom(e.target.value)}
        className="h-[9px] w-[66px] appearance-none bg-[linear-gradient(#c9c9c9,#c9c9c9)] bg-[length:100%_1px] bg-center bg-no-repeat [&::-webkit-slider-thumb]:h-2 [&::-webkit-slider-thumb]:w-[6px] [&::-webkit-slider-thumb]:appearance-none [&::-webkit-slider-thumb]:rounded-b-sm [&::-webkit-slider-thumb]:border [&::-webkit-slider-thumb]:border-[#dbe6f3] [&::-webkit-slider-thumb]:bg-[#5f83ad]"
      />
      <button className="mr-[2px]" aria-label="放大"><Svg box={10} className="size-[9px]"><circle cx="5" cy="5" r="4" fill="#6d94c4" stroke="#dde8f5" /><path d="M3 5h4M5 3v4" stroke="#fff" strokeWidth="1.500" /></Svg></button>
      {sep}
      <button className="mx-[2px]" aria-label="视频"><Svg box={10} className="size-2"><rect y="1" width="10" height="8" rx="2" fill="#e01616" /><path d="M4 3l3 2-3 2z" fill="#fff" /></Svg></button>
      {sep}
      <button className="mx-[2px]" aria-label="录制"><Svg box={10} className="size-[9px]"><circle cx="5" cy="5" r="4" fill="#d8221e" stroke="#e88" strokeWidth=".6" /></Svg></button>
      {sep}
      <button className="mr-[2px] ml-[3px]" aria-label="上传"><Svg box={10} className="size-[8px]"><path d="M5 0l4 5H7v2H3V5H1z" fill="#72c83c" /><path d="M0 9h10" stroke="#d9e5c8" strokeWidth="2" /></Svg></button>
    </footer>
  );
};

const App = () => {
  const [tab, setTab] = useState('数据管理');

  return (
    <div className="flex h-screen flex-col overflow-hidden bg-[#535353] font-['Noto_Sans','Noto_Sans_CJK_SC',sans-serif] text-[7px]">
      <Header tab={tab} onTab={setTab} />
      <Ribbon />
      <FloatBar />
      <div className="flex min-h-0 flex-1">
        <div className="flex min-w-0 flex-1 flex-col bg-[#717171]">
          <DocTabs />
          <main className="relative min-h-0 flex-1 border-r-3 border-b-2 border-l-3 border-[#b5b5b5] bg-[#fbfdfc]">
            <ShaftView />
            <FeatureTree />
          </main>
          <div className="h-1 shrink-0 bg-[#555]" />
          <PromptBar />
        </div>
        <SideTabs />
      </div>
      <StatusBar />
    </div>
  );
};

export default App;
